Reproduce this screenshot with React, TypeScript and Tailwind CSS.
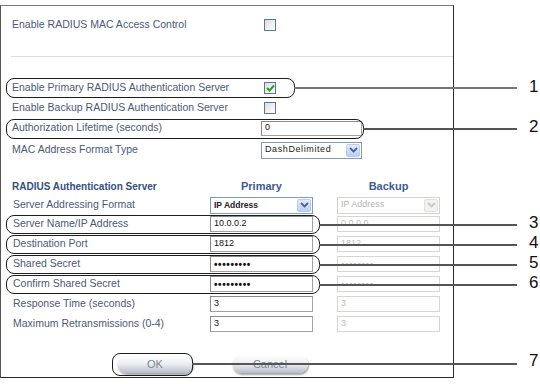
import React from "react"

const labelCls = "text-[10.5px] text-[#4b5a7b] whitespace-nowrap"

function Checkbox({ checked = false }: { checked?: boolean }) {
  return (
    <div className="flex h-[12px] w-[12px] items-center justify-center border border-[#5f7597] bg-gradient-to-br from-[#dedfd8] to-white">
      {checked && (
        <svg width="9" height="8" viewBox="0 0 9 8">
          <path d="M1 4 L3.5 6.5 L8 1.5" fill="none" stroke="#22a022" strokeWidth="2" />
        </svg>
      )}
    </div>
  )
}

function Chevron({ color }: { color: string }) {
  return (
    <svg width="9" height="6" viewBox="0 0 9 6">
      <path d="M1 1 L4.5 4.5 L8 1" fill="none" stroke={color} strokeWidth="1.8" />
    </svg>
  )
}

function Select({ text, disabled = false, wide = false }: { text: string; disabled?: boolean; wide?: boolean }) {
  return (
    <div
      className={
        disabled
          ? "flex h-[17px] w-[103px] items-center border border-[#d4d4d0] bg-white pl-[3px]"
          : wide
            ? "flex h-[17px] w-[101px] items-center border border-[#7f9db9] bg-white pl-[3px]"
            : "flex h-[17px] w-[103px] items-center border border-[#7f9db9] bg-white pl-[3px]"
      }
    >
      <span
        className={
          disabled
            ? "text-[9px] text-[#b4b4b4]"
            : wide
              ? "text-[9px] tracking-[0.6px] text-[#222]"
              : "text-[8.5px] font-bold text-[#222]"
        }
      >
        {text}
      </span>
      <div
        className={
          disabled
            ? "ml-auto mr-px flex h-[13px] w-[14px] items-center justify-center rounded-[2px] border border-[#e2e2e2] bg-[#f2f2f0]"
            : "ml-auto mr-px flex h-[13px] w-[14px] items-center justify-center rounded-[2px] border border-[#b9cbf3] bg-gradient-to-b from-[#e4ecfe] to-[#b9cdf7]"
        }
      >
        <Chevron color={disabled ? "#c8c8c8" : "#4d6185"} />
      </div>
    </div>
  )
}

function Input({ value, disabled = false, secret = false }: { value: string; disabled?: boolean; secret?: boolean }) {
  return (
    <div
      className={
        disabled
          ? "flex h-[16px] w-[103px] items-center border border-[#d6d6d2] bg-white pl-[3px]"
          : "flex h-[16px] w-[103px] items-center border border-[#a2a2a2] border-t-[#8a8a8a] border-l-[#8a8a8a] bg-white pl-[3px]"
      }
    >
      <span
        className={
          secret
            ? disabled
              ? "text-[10px] font-bold tracking-[0.6px] text-[#c4c4c4]"
              : "text-[10px] font-bold tracking-[0.6px] text-[#111]"
            : disabled
              ? "text-[9px] text-[#bdbdbd]"
              : "text-[9px] text-[#111]"
        }
      >
        {value}
      </span>
    </div>
  )
}

function Num({ n }: { n: string }) {
  return (
    <span className="absolute left-[528px] top-[-1px] text-[17px] leading-[20px] text-[#111]">{n}</span>
  )
}

export default function App() {
  const dots = "•••••••••"
  return (
    <div className="relative h-[384px] w-[540px] overflow-hidden bg-white font-['Liberation_Sans',Arial,sans-serif]">
      <div className="mt-[5px] h-[373px] w-[454px] border border-[#2a2a2a] border-t-[#7a7a7a] border-l-[#555]">
        <div className="pt-[9px]">
          <div className="flex h-[20px] items-center">
            <span className={`${labelCls} w-[263px] pl-[11px]`}>Enable RADIUS MAC Access Control</span>
            <Checkbox />
          </div>

          <div className="ml-[10px] mt-[21px] h-px bg-[#d7dde5]" />

          <div className="relative mt-[21px] flex h-[20px] items-center">
            <span className={`${labelCls} w-[263px] pl-[11px]`}>Enable Primary RADIUS Authentication Server</span>
            <Checkbox checked />
            <div className="absolute left-[5px] top-0 h-[20px] w-[289px] rounded-[8px] border-[1.5px] border-[#1c1c1c]" />
            <div className="absolute left-[293px] top-[9px] h-[2px] w-[223px] bg-[#777]" />
            <Num n="1" />
          </div>

          <div className="flex h-[20px] items-center">
            <span className={`${labelCls} w-[263px] pl-[11px]`}>Enable Backup RADIUS Authentication Server</span>
            <Checkbox />
          </div>

          <div className="relative flex h-[20px] items-center">
            <span className={`${labelCls} w-[260px] pl-[11px]`}>Authorization Lifetime (seconds)</span>
            <div className="flex h-[15px] w-[101px] items-center border border-[#a2a2a2] border-t-[#8a8a8a] border-l-[#8a8a8a] bg-white pl-[3px]">
              <span className="text-[9px] text-[#111]">0</span>
            </div>
            <div className="absolute left-[5px] top-px h-[20px] w-[358px] rounded-[8px] border-[1.5px] border-[#1c1c1c]" />
            <div className="absolute left-[362px] top-[10px] h-[2px] w-[154px] bg-[#555]" />
            <Num n="2" />
          </div>

          <div className="mt-[2px] flex h-[20px] items-center">
            <span className={`${labelCls} w-[260px] pl-[11px]`}>MAC Address Format Type</span>
            <Select text="DashDelimited" wide />
          </div>

          <div className="mt-[16px] grid h-[20px] grid-cols-[209px_103px_24px_103px] items-center">
            <span className="pl-[11px] text-[10px] font-bold text-[#34507f] whitespace-nowrap">RADIUS Authentication Server</span>
            <span className="text-center text-[11px] font-bold text-[#3d5a95]">Primary</span>
            <span />
            <span className="text-center text-[11px] font-bold text-[#3d5a95]">Backup</span>
          </div>

          <div className="grid h-[18px] grid-cols-[209px_103px_24px_103px] items-center">
            <span className={`${labelCls} pl-[12px]`}>Server Addressing Format</span>
            <Select text="IP Address" />
            <span />
            <Select text="IP Address" disabled />
          </div>

          <div className="relative grid h-[20px] grid-cols-[209px_103px_24px_103px] items-center">
            <span className={`${labelCls} pl-[12px]`}>Server Name/IP Address</span>
            <Input value="10.0.0.2" />
            <span />
            <Input value="0.0.0.0" disabled />
            <div className="absolute left-[5px] top-px h-[19px] w-[314px] rounded-[8px] border-[1.5px] border-[#1c1c1c]" />
            <div className="absolute left-[318px] top-[10px] h-[2px] w-[198px] bg-[#555]" />
            <Num n="3" />
          </div>

          <div className="relative grid h-[20px] grid-cols-[209px_103px_24px_103px] items-center">
            <span className={`${labelCls} pl-[12px]`}>Destination Port</span>
            <Input value="1812" />
            <span />
            <Input value="1812" disabled />
            <div className="absolute left-[5px] top-px h-[19px] w-[314px] rounded-[8px] border-[1.5px] border-[#1c1c1c]" />
            <div className="absolute left-[318px] top-[10px] h-[2px] w-[198px] bg-[#555]" />
            <Num n="4" />
          </div>

          <div className="relative grid h-[20px] grid-cols-[209px_103px_24px_103px] items-center">
            <span className={`${labelCls} pl-[12px]`}>Shared Secret</span>
            <Input value={dots} secret />
            <span />
            <Input value="••••••••" secret disabled />
            <div className="absolute left-[5px] top-px h-[19px] w-[314px] rounded-[8px] border-[1.5px] border-[#1c1c1c]" />
            <div className="absolute left-[318px] top-[10px] h-[2px] w-[198px] bg-[#555]" />
            <Num n="5" />
          </div>

          <div className="relative grid h-[20px] grid-cols-[209px_103px_24px_103px] items-center">
            <span className={`${labelCls} pl-[12px]`}>Confirm Shared Secret</span>
            <Input value={dots} secret />
            <span />
            <Input value="••••••••" secret disabled />
            <div className="absolute left-[5px] top-px h-[19px] w-[314px] rounded-[8px] border-[1.5px] border-[#1c1c1c]" />
            <div className="absolute left-[318px] top-[10px] h-[2px] w-[198px] bg-[#555]" />
            <Num n="6" />
          </div>

          <div className="grid h-[20px] grid-cols-[209px_103px_24px_103px] items-center">
            <span className={`${labelCls} pl-[12px]`}>Response Time (seconds)</span>
            <Input value="3" />
            <span />
            <Input value="3" disabled />
          </div>

          <div className="grid h-[20px] grid-cols-[209px_103px_24px_103px] items-center">
            <span className={`${labelCls} pl-[12px]`}>Maximum Retransmissions (0-4)</span>
            <Input value="3" />
            <span />
            <Input value="3" disabled />
          </div>

          <div className="relative mt-[18px] flex h-[24px] items-center gap-[39px] pl-[116px]">
            <div className="flex h-[18px] w-[76px] items-center justify-center rounded-[9px] bg-gradient-to-b from-white via-[#eceef3] to-[#b7bdc9] shadow-[1px_2px_2px_rgba(0,0,0,0.35)]">
              <span className="text-[11px] text-[#7b8494]">OK</span>
            </div>
            <div className="flex h-[18px] w-[76px] items-center justify-center rounded-[9px] bg-gradient-to-b from-white via-[#eceef3] to-[#b7bdc9] shadow-[1px_2px_2px_rgba(0,0,0,0.35)]">
              <span className="text-[11px] text-[#7b8494]">Cancel</span>
            </div>
            <div className="absolute left-[111px] top-px h-[23px] w-[81px] rounded-[8px] border-[1.5px] border-[#1c1c1c]" />
            <div className="absolute left-[191px] top-[11px] z-10 h-[2px] w-[325px] bg-[#555]" />
            <Num n="7" />
          </div>
        </div>
      </div>
    </div>
  )
}
